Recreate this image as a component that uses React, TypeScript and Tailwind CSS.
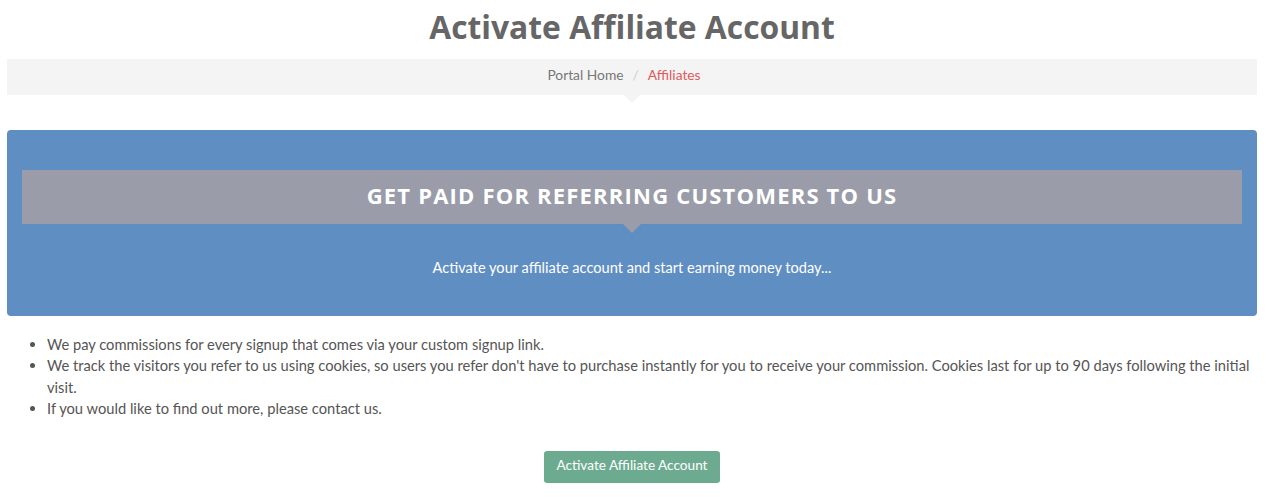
export default function App() {
  return (
    <div className="min-h-[504px] bg-white pl-[7px] pr-[9px] font-['Lato','Liberation_Sans',sans-serif] text-[15px] text-[#555]">
      {/* Page title */}
      <h1 className="pt-[8px] text-center font-['Open_Sans','Liberation_Sans',sans-serif] text-[31.8px] font-bold leading-[38px] text-[#666]">
        Activate Affiliate Account
      </h1>

      {/* Breadcrumb */}
      <div className="relative mt-[13px] flex h-[36px] items-center justify-center bg-[#f4f4f4] pb-[3px] pr-[16px] text-[13.8px]">
        <span className="text-[#777]">Portal Home</span>
        <span className="px-[9px] text-[#ccc]">/</span>
        <span className="text-[#e0595b]">Affiliates</span>
        <span className="absolute left-1/2 top-full -translate-x-1/2 border-x-[8px] border-t-[8px] border-x-transparent border-t-[#f4f4f4]" />
      </div>

      {/* Promo panel */}
      <div className="mt-[35px] rounded-[4px] bg-[#5f8ec3] px-[15px] pb-[37px] pt-[40px] text-center text-white">
        <div className="relative flex h-[54px] items-center justify-center bg-[#9a9ca9] pb-[3px]">
          <h2 className="font-['Open_Sans','Liberation_Sans',sans-serif] text-[22px] font-bold uppercase tracking-[1.2px]">
            Get Paid for Referring Customers to Us
          </h2>
          <span className="absolute left-1/2 top-full -translate-x-1/2 border-x-[9px] border-t-[9px] border-x-transparent border-t-[#9a9ca9]" />
        </div>
        <p className="mt-[33px] text-[14.6px] leading-[22px]">
          Activate your affiliate account and start earning money today...
        </p>
      </div>

      {/* Details */}
      <ul className="mt-[18px] list-disc pl-[40px] pr-[6px] text-[14.7px] leading-[21.4px] marker:text-[#555]">
        <li>We pay commissions for every signup that comes via your custom signup link.</li>
        <li>
          We track the visitors you refer to us using cookies, so users you refer don't have to purchase instantly for you to
          receive your commission. Cookies last for up to 90 days following the initial visit.
        </li>
        <li>If you would like to find out more, please contact us.</li>
      </ul>

      <div className="mt-[31px] flex justify-center">
        <button className="h-[32px] rounded-[3px] bg-[#6dab91] px-[12px] pb-[2px] text-[13.6px] text-white">
          Activate Affiliate Account
        </button>
      </div>
    </div>
  );
}
